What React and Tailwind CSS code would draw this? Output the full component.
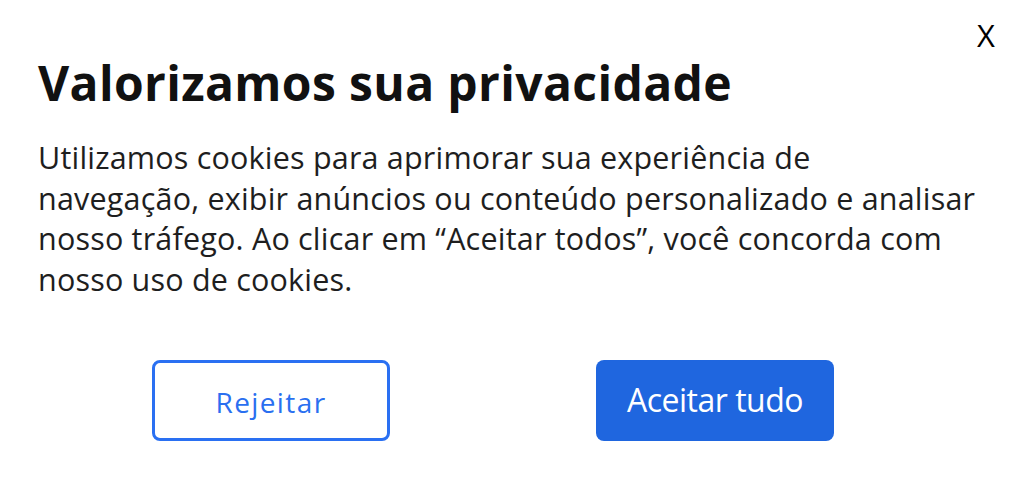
export default function App() {
  return (
    <div
      className="relative w-[1024px] h-[494px] bg-white overflow-hidden"
      style={{ fontFamily: '"Open Sans", "Liberation Sans", sans-serif' }}
    >
      <button className="absolute top-[15px] right-[29px] text-[31px] leading-[40px] text-black font-normal">
        X
      </button>

      <div className="pl-[38px] pt-[59px]">
        <h1 className="text-[48px] leading-[48px] font-bold tracking-[0.37px] text-[#111]">
          Valorizamos sua privacidade
        </h1>
        <p className="mt-[30px] w-[980px] text-[30.5px] leading-[40.7px] tracking-[0.2px] text-[#1e1e1e]">
          Utilizamos cookies para aprimorar sua experiência de
          <br />
          navegação, exibir anúncios ou conteúdo personalizado e analisar
          <br />
          nosso tráfego. Ao clicar em “Aceitar todos”, você concorda com
          <br />
          nosso uso de cookies.
        </p>
      </div>

      <div className="mt-[60px] ml-[49px] w-[888px] grid grid-cols-2">
        <button className="justify-self-center w-[238px] h-[81px] rounded-[8px] border-[3px] border-[#2a70f2] bg-white text-[#2a6ff0] text-[28px] tracking-[1.4px] pt-[4px]">
          Rejeitar
        </button>
        <button className="justify-self-center w-[238px] h-[81px] rounded-[8px] bg-[#1f66df] text-white text-[32px] tracking-[-0.5px]">
          Aceitar tudo
        </button>
      </div>
    </div>
  );
}
